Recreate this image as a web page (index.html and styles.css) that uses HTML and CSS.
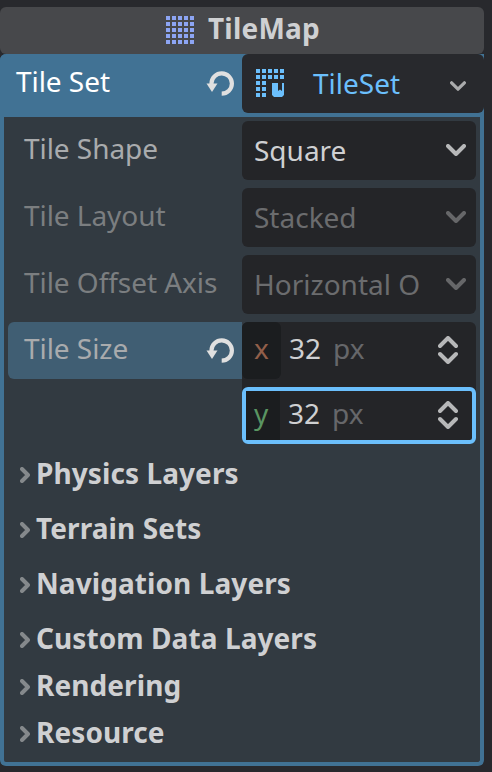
FILE: index.html
```html
<!DOCTYPE html>
<html lang="en">
<head>
<meta charset="utf-8">
<title>TileMap Inspector</title>
<link rel="stylesheet" href="styles.css">
</head>
<body>
<svg class="defs" width="0" height="0">
  <defs>
    <symbol id="revert" viewBox="0 0 28 26"><path d="M5.5 14V13.3A10.2 10.2 0 1 1 15.7 23.7" fill="none" stroke="currentColor" stroke-width="4.2"/><path d="M.5 13.5H11.5L6 22z" fill="currentColor"/></symbol>
    <symbol id="down" viewBox="0 0 20 12"><path d="M2 2l8 8 8-8" fill="none" stroke="currentColor" stroke-width="4" stroke-linecap="round" stroke-linejoin="round"/></symbol>
    <symbol id="updown" viewBox="0 0 20 28"><path d="M2 10l8-8 8 8M2 18l8 8 8-8" fill="none" stroke="currentColor" stroke-width="4" stroke-linecap="round" stroke-linejoin="round"/></symbol>
    <symbol id="right" viewBox="0 0 10 16"><path d="M2 2l6 6-6 6" fill="none" stroke="currentColor" stroke-width="4" stroke-linecap="round" stroke-linejoin="round"/></symbol>
    <pattern id="dots" width="6" height="6" patternUnits="userSpaceOnUse"><path d="M0 0h4v4H0z" fill="#8da5f3"/></pattern>
    <pattern id="dots-accent" width="6" height="6" patternUnits="userSpaceOnUse"><path d="M0 0h4v4H0z" fill="#6bbffc"/></pattern>
  </defs>
</svg>
<main class="inspector">
  <header class="title">
    <svg class="title-icon" width="28" height="28"><path d="M0 0h28v28H0z" fill="url(#dots)"/></svg>
    <span>TileMap</span>
  </header>
  <section class="resource">
    <div class="row resource-head">
      <div class="label"><span>Tile Set</span><svg class="revert"><use href="#revert"/></svg></div>
      <div class="picker">
        <svg class="picker-icon" width="28" height="28"><path d="M0 0h28v10H10v18H0z" fill="url(#dots-accent)"/><path d="M16 14h6v8l2-1.6 2 1.6v-8h2v12l-2 2h-8l-2-2z" fill="#6bbffc"/></svg>
        <span>TileSet</span>
        <svg class="picker-arrow"><use href="#down"/></svg>
      </div>
    </div>
    <div class="body">
      <div class="row prop"><div class="label"><span>Tile Shape</span></div><div class="select"><span>Square</span><svg class="arrow"><use href="#down"/></svg></div></div>
      <div class="row prop disabled"><div class="label"><span>Tile Layout</span></div><div class="select"><span>Stacked</span><svg class="arrow"><use href="#down"/></svg></div></div>
      <div class="row prop disabled"><div class="label"><span>Tile Offset Axis</span></div><div class="select"><span>Horizontal O</span><svg class="arrow"><use href="#down"/></svg></div></div>
      <div class="row size">
        <div class="label selected"><span>Tile Size</span><svg class="revert"><use href="#revert"/></svg></div>
        <div class="fields">
          <div class="field"><span class="axis axis-x">x</span><span class="value">32</span><span class="unit">px</span><svg class="spin"><use href="#updown"/></svg></div>
          <div class="field focused"><span class="axis axis-y">y</span><span class="value">32</span><span class="unit">px</span><svg class="spin"><use href="#updown"/></svg></div>
        </div>
      </div>
      <div class="groups">
        <div class="group"><svg><use href="#right"/></svg><span>Physics Layers</span></div>
        <div class="group"><svg><use href="#right"/></svg><span>Terrain Sets</span></div>
        <div class="group"><svg><use href="#right"/></svg><span>Navigation Layers</span></div>
        <div class="group compact"><svg><use href="#right"/></svg><span>Custom Data Layers</span></div>
        <div class="group compact"><svg><use href="#right"/></svg><span>Rendering</span></div>
        <div class="group compact"><svg><use href="#right"/></svg><span>Resource</span></div>
      </div>
    </div>
  </section>
</main>
</body>
</html>
```
FILE: styles.css
```css
* { box-sizing: border-box; }
body {
  margin: 0;
  height: 772px;
  overflow: hidden;
  background: #28292d;
  color: #cfd0d2;
  font: 28px/38px "Noto Sans", sans-serif;
}
svg { display: block; flex: none; }
.defs { position: absolute; }
.inspector { width: 484px; padding-top: 7px; white-space: nowrap; }

.title {
  display: flex;
  height: 47px;
  padding: 2px 0 0 166px;
  gap: 14px;
  border-radius: 6px;
  background: #47484b;
  font-weight: 700;
  letter-spacing: .2px;
}
.title-icon { margin-top: 7px; }

.resource {
  height: 712px;
  border: 4px solid #417294;
  border-top: 0;
  border-radius: 6px;
  background: #323a41;
}
.row { display: flex; }
.label {
  display: flex;
  flex: none;
  justify-content: space-between;
  width: 234px;
  padding: 8px 8px 0 16px;
  color: #a9abad;
  letter-spacing: -.05px;
}
.revert { width: 28px; height: 26px; color: #e0e0e0; }

.resource-head { height: 63px; margin: 0 -4px; border-radius: 6px 0 0; background: #417294; }
.resource-head .label { width: 242px; color: #fff; }
.resource-head .revert { margin-top: 8px; }
.picker {
  display: flex;
  flex: 1;
  height: 59px;
  padding: 10px 18px 0 14px;
  border-radius: 6px;
  background: #28292d;
  color: #6bbffc;
}
.picker-icon { margin: 5px 29px 0 0; }
.picker-arrow { width: 16px; height: 10px; margin: 17px 0 0 auto; color: #aaabac; }

.body { padding: 4px 4px 0; }
.prop { height: 59px; margin-bottom: 8px; }
.select {
  display: flex;
  flex: 1;
  justify-content: space-between;
  padding: 10px 10px 0 12px;
  border-radius: 6px;
  background: #242528;
}
.arrow { width: 20px; height: 12px; margin-top: 13px; color: #b7b8b9; }
.disabled .label { color: #7b7e80; }
.disabled .select { color: #6b6c6e; }
.disabled .arrow { color: #666769; }

.size { height: 122px; }
.selected { height: 57px; padding-top: 7px; border-radius: 6px 0 0 6px; background: #405e73; }
.selected .revert { margin-top: 8px; }
.fields { flex: 1; border-radius: 6px; background: #242528; }
.field { display: flex; height: 57px; margin-bottom: 8px; }
.axis { width: 39px; padding: 7px 0 0 12px; border-radius: 6px; background: #1b1d1f; }
.axis-x { color: #925f4a; }
.axis-y { color: #5a9562; }
.value { padding: 7px 0 0 8px; }
.unit { padding: 7px 0 0 12px; color: #66676a; }
.spin { width: 20px; height: 28px; margin: 14px 18px 0 auto; color: #b7b8b9; }
.focused { margin: 0; border: 4px solid #6bbffc; border-radius: 6px; }
.focused .axis { width: 34px; padding: 3px 0 0 8px; border-radius: 0; }
.focused .value, .focused .unit { padding-top: 3px; }
.focused .spin { margin: 10px 14px 0 auto; }

.groups { padding: 10px 0 0 12px; font-weight: 700; letter-spacing: .08px; }
.group { display: flex; height: 55px; gap: 6px; }
.compact { height: 47px; }
.group svg { width: 10px; height: 16px; margin-top: 13px; color: #85898c; }
```
